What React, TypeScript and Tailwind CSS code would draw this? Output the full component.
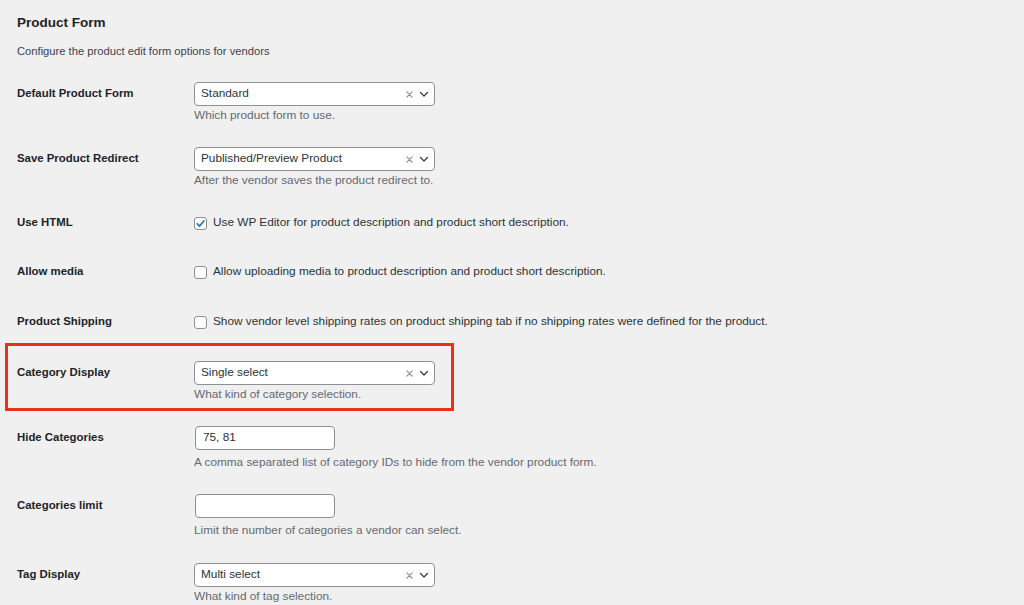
import React from "react";

type Row = {
  label: string;
  kind: "select" | "check" | "text";
  value?: string;
  checked?: boolean;
  help?: string;
  h: string;
  highlight?: boolean;
};

const rows: Row[] = [
  { label: "Default Product Form", kind: "select", value: "Standard", help: "Which product form to use.", h: "h-[65px]" },
  { label: "Save Product Redirect", kind: "select", value: "Published/Preview Product", help: "After the vendor saves the product redirect to.", h: "h-[64px]" },
  { label: "Use HTML", kind: "check", checked: true, value: "Use WP Editor for product description and product short description.", h: "h-[49px]" },
  { label: "Allow media", kind: "check", value: "Allow uploading media to product description and product short description.", h: "h-[50px]" },
  { label: "Product Shipping", kind: "check", value: "Show vendor level shipping rates on product shipping tab if no shipping rates were defined for the product.", h: "h-[51px]" },
  { label: "Category Display", kind: "select", value: "Single select", help: "What kind of category selection.", h: "h-[65px]", highlight: true },
  { label: "Hide Categories", kind: "text", value: "75, 81", help: "A comma separated list of category IDs to hide from the vendor product form.", h: "h-[68px]" },
  { label: "Categories limit", kind: "text", value: "", help: "Limit the number of categories a vendor can select.", h: "h-[69px]" },
  { label: "Tag Display", kind: "select", value: "Multi select", help: "What kind of tag selection.", h: "h-[42px]" },
];

function SelectBox({ value }: { value: string }) {
  return (
    <div className="w-[241px] h-[24px] bg-white border border-[#8c8f94] rounded-[4px] flex items-center pl-[6px] pr-[5px] text-[11.8px] text-[#2c3338]">
      <span className="flex-1">{value}</span>
      {/* clear x */}
      <svg width="7" height="7" viewBox="0 0 8 8" className="mr-[6px]" stroke="#8c8f94" strokeWidth="1.4" strokeLinecap="round">
        <path d="M1 1l6 6M7 1l-6 6" />
      </svg>
      {/* chevron */}
      <svg width="10" height="7" viewBox="0 0 10 7" fill="none" stroke="#3c434a" strokeWidth="1.4" strokeLinecap="round" strokeLinejoin="round">
        <path d="M1.5 1.5l3.5 3.5 3.5-3.5" />
      </svg>
    </div>
  );
}

function CheckBox({ checked }: { checked?: boolean }) {
  return (
    <div className="w-[13px] h-[13px] bg-white border border-[#8c8f94] rounded-[3px] flex items-center justify-center shrink-0">
      {checked && (
        <svg width="11" height="11" viewBox="0 0 12 12" fill="none" stroke="#2271b1" strokeWidth="1.8" strokeLinecap="round" strokeLinejoin="round">
          <path d="M2.5 6.3l2.4 2.5 4.8-5.6" />
        </svg>
      )}
    </div>
  );
}

export default function App() {
  return (
    <div className="w-[1024px] h-[605px] overflow-hidden bg-[#f0f0f1] text-[#1d2327] pl-[17px]" style={{ fontFamily: '"Liberation Sans", Arial, sans-serif' }}>
      <h2 className="text-[13.5px] font-bold pt-[15px] leading-[16px] text-[#1d2327]">Product Form</h2>
      <p className="text-[11.2px] text-[#3c434a] mt-[13px] leading-[14px]">Configure the product edit form options for vendors</p>

      <div className="mt-[24px]">
        {rows.map((r) => (
          <div key={r.label} className={`relative flex ${r.h}`}>
            {r.highlight && (
              <div className="absolute left-[-12px] top-[-18px] w-[449px] h-[68px] border-[3px] border-[#e63219] pointer-events-none" />
            )}
            <div className="w-[177px] h-[24px] flex items-center text-[11.4px] font-bold text-[#1d2327]">{r.label}</div>
            <div className="flex flex-col">
              {r.kind === "select" && <SelectBox value={r.value || ""} />}
              {r.kind === "text" && (
                <div className="w-[140px] h-[24px] bg-white border border-[#8c8f94] rounded-[4px] flex items-center px-[7px] text-[11.8px] text-[#2c3338] ml-[1px]">
                  {r.value}
                </div>
              )}
              {r.kind === "check" && (
                <div className="h-[24px] flex items-center gap-[6px] text-[11.8px] text-[#2c3338]">
                  <CheckBox checked={r.checked} />
                  <span>{r.value}</span>
                </div>
              )}
              {r.help && (
                <div className={`text-[11.8px] text-[#646970] leading-[16px] ${r.kind === "text" ? "mt-[4px]" : "mt-[1px]"}`}>{r.help}</div>
              )}
            </div>
          </div>
        ))}
      </div>
    </div>
  );
}
